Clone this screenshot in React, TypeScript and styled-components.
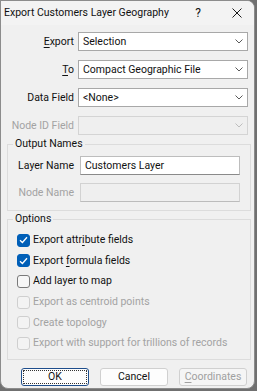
import React from "react";
import styled, { createGlobalStyle } from "styled-components";

const GlobalStyle = createGlobalStyle`
  html, body {
    margin: 0;
    padding: 0;
    background: #707070;
  }
  body {
    font-family: Roboto, "Noto Sans", "Liberation Sans", sans-serif;
    font-size: 10.5px;
    line-height: 14px;
    color: #111111;
  }
`;

const Window = styled("div")`
  width: 255px;
  height: 389px;
  box-sizing: border-box;
  background: #f0f0f0;
  border: 1px solid #8c8c8c;
  border-radius: 0 8px 8px 8px;
  display: flex;
  flex-direction: column;
  overflow: hidden;
`;

const TitleBar = styled("div")`
  height: 24px;
  display: flex;
  align-items: center;
  padding-left: 3px;
  background: #f3f3f3;
`;

const Title = styled("div")`
  flex: 1;
  white-space: nowrap;
`;

const TitleButton = styled("div")<{ width: number }>`
  width: ${props => props.width}px;
  display: flex;
  align-items: center;
  justify-content: center;
  font-size: 12px;
`;

const Content = styled("div")`
  padding: 7px 3px 0 6px;
  display: flex;
  flex-direction: column;
`;

const FieldGrid = styled("div")`
  display: grid;
  grid-template-columns: 67px 170px;
  column-gap: 4px;
  row-gap: 9px;
  align-items: center;
`;

const Label = styled("label")<{ disabled?: boolean }>`
  text-align: right;
  white-space: nowrap;
  color: ${props => (props.disabled ? "#a3a3a3" : "#111111")};
`;

const Mnemonic = styled("u")`
  text-underline-offset: 2px;
`;

const Combo = styled("div")<{ disabled?: boolean }>`
  height: 19px;
  box-sizing: border-box;
  border: 1px solid ${props => (props.disabled ? "#d4d4d4" : "#a8a8a8")};
  background: ${props => (props.disabled ? "#efefef" : "#ffffff")};
  display: flex;
  align-items: center;
  padding-left: 4px;
  padding-right: 4px;
`;

const ComboText = styled("div")`
  flex: 1;
  white-space: nowrap;
`;

const Group = styled("fieldset")<{ gapTop: number }>`
  margin: ${props => props.gapTop}px 0 0 0;
  border: 1px solid #dcdcdc;
  padding: 0;
  width: 244px;
  box-sizing: border-box;
  min-width: 0;
`;

const Legend = styled("legend")`
  margin-left: 5px;
  padding: 0 2px;
  line-height: 14px;
`;

const NameGrid = styled("div")`
  display: grid;
  grid-template-columns: 66px 160px;
  column-gap: 6px;
  row-gap: 8px;
  align-items: center;
  padding: 5px 0 8px 0;
`;

const TextBox = styled("div")<{ disabled?: boolean }>`
  height: 19px;
  box-sizing: border-box;
  border: 1px solid ${props => (props.disabled ? "#d2d2d2" : "#bdbdbd")};
  border-bottom-color: ${props => (props.disabled ? "#bcbcbc" : "#8a8a8a")};
  background: ${props => (props.disabled ? "#efefef" : "#ffffff")};
  padding-left: 4px;
  display: flex;
  align-items: center;
  white-space: nowrap;
`;

const OptionList = styled("div")`
  display: flex;
  flex-direction: column;
  padding: 4px 0 5px 9px;
`;

const OptionRow = styled("div")<{ disabled?: boolean }>`
  height: 20.6px;
  display: flex;
  align-items: center;
  gap: 3px;
  white-space: nowrap;
  color: ${props => (props.disabled ? "#a3a3a3" : "#111111")};
`;

const Box = styled("div")<{ checked?: boolean; disabled?: boolean }>`
  width: 13px;
  height: 13px;
  flex: none;
  box-sizing: border-box;
  border-radius: 3px;
  border: 1px solid
    ${props =>
      props.checked ? "#005fb8" : props.disabled ? "#cfcfcf" : "#7a7a7a"};
  background: ${props =>
    props.checked ? "#005fb8" : props.disabled ? "#f3f3f3" : "#f7f7f7"};
  display: flex;
  align-items: center;
  justify-content: center;
`;

const ButtonRow = styled("div")`
  display: flex;
  gap: 11px;
  padding: 8px 0 0 14px;
`;

const Button = styled("div")<{ primary?: boolean; disabled?: boolean }>`
  width: 68px;
  height: 18px;
  box-sizing: border-box;
  border-radius: 3px;
  border: 1px solid ${props => (props.primary ? "#1e4e8c" : "#d0d0d0")};
  background: ${props => (props.disabled ? "#f5f5f5" : "#fdfdfd")};
  color: ${props => (props.disabled ? "#a0a0a0" : "#111111")};
  display: flex;
  align-items: center;
  justify-content: center;
  outline: ${props => (props.primary ? "1px dotted #333" : "none")};
  outline-offset: -3px;
`;

const Chevron: React.FC<{ disabled?: boolean }> = ({ disabled }) => (
  <svg width="8" height="5" viewBox="0 0 8 5">
    <path
      d="M0.5 0.5 L4 4 L7.5 0.5"
      fill="none"
      stroke={disabled ? "#bdbdbd" : "#5a5a5a"}
      strokeWidth="1"
    />
  </svg>
);

const Check = () => (
  <svg width="9" height="8" viewBox="0 0 9 8">
    <path
      d="M1 4.2 L3.4 6.5 L8 1.2"
      fill="none"
      stroke="#ffffff"
      strokeWidth="1.3"
    />
  </svg>
);

const CloseIcon = () => (
  <svg width="10" height="10" viewBox="0 0 10 10">
    <path d="M0.5 0.5 L9.5 9.5 M9.5 0.5 L0.5 9.5" stroke="#1a1a1a" strokeWidth="1" />
  </svg>
);

const options = [
  { key: "attr", checked: true, disabled: false },
  { key: "formula", checked: true, disabled: false },
  { key: "map", checked: false, disabled: false },
  { key: "centroid", checked: false, disabled: true },
  { key: "topology", checked: false, disabled: true },
  { key: "trillions", checked: false, disabled: true },
];

const optionLabel = (key: string) => {
  switch (key) {
    case "attr":
      return (
        <span>
          Export attr<Mnemonic>i</Mnemonic>bute fields
        </span>
      );
    case "formula":
      return (
        <span>
          Export <Mnemonic>f</Mnemonic>ormula fields
        </span>
      );
    case "map":
      return <span>Add layer to map</span>;
    case "centroid":
      return <span>Export as centroid points</span>;
    case "topology":
      return <span>Create topology</span>;
    default:
      return <span>Export with support for trillions of records</span>;
  }
};

const App: React.FC = () => {
  return (
    <>
      <GlobalStyle />
      <Window>
        <TitleBar>
          <Title>Export Customers Layer Geography</Title>
          <TitleButton width={44}>?</TitleButton>
          <TitleButton width={34}>
            <CloseIcon />
          </TitleButton>
        </TitleBar>
        <Content>
          <FieldGrid>
            <Label>
              <Mnemonic>E</Mnemonic>xport
            </Label>
            <Combo>
              <ComboText>Selection</ComboText>
              <Chevron />
            </Combo>
            <Label>
              <Mnemonic>T</Mnemonic>o
            </Label>
            <Combo>
              <ComboText>Compact Geographic File</ComboText>
              <Chevron />
            </Combo>
            <Label>Data Field</Label>
            <Combo>
              <ComboText>&lt;None&gt;</ComboText>
              <Chevron />
            </Combo>
            <Label disabled>Node ID Field</Label>
            <Combo disabled>
              <ComboText />
              <Chevron disabled />
            </Combo>
          </FieldGrid>
          <Group gapTop={2}>
            <Legend>Output Names</Legend>
            <NameGrid>
              <Label>Layer Name</Label>
              <TextBox>Customers Layer</TextBox>
              <Label disabled>Node Name</Label>
              <TextBox disabled />
            </NameGrid>
          </Group>
          <Group gapTop={1}>
            <Legend>Options</Legend>
            <OptionList>
              {options.map(o => (
                <OptionRow key={o.key} disabled={o.disabled}>
                  <Box checked={o.checked} disabled={o.disabled}>
                    {o.checked && <Check />}
                  </Box>
                  {optionLabel(o.key)}
                </OptionRow>
              ))}
            </OptionList>
          </Group>
          <ButtonRow>
            <Button primary>OK</Button>
            <Button>Cancel</Button>
            <Button disabled>
              <span>
                <Mnemonic>C</Mnemonic>oordinates
              </span>
            </Button>
          </ButtonRow>
        </Content>
      </Window>
    </>
  );
};

export default App;
